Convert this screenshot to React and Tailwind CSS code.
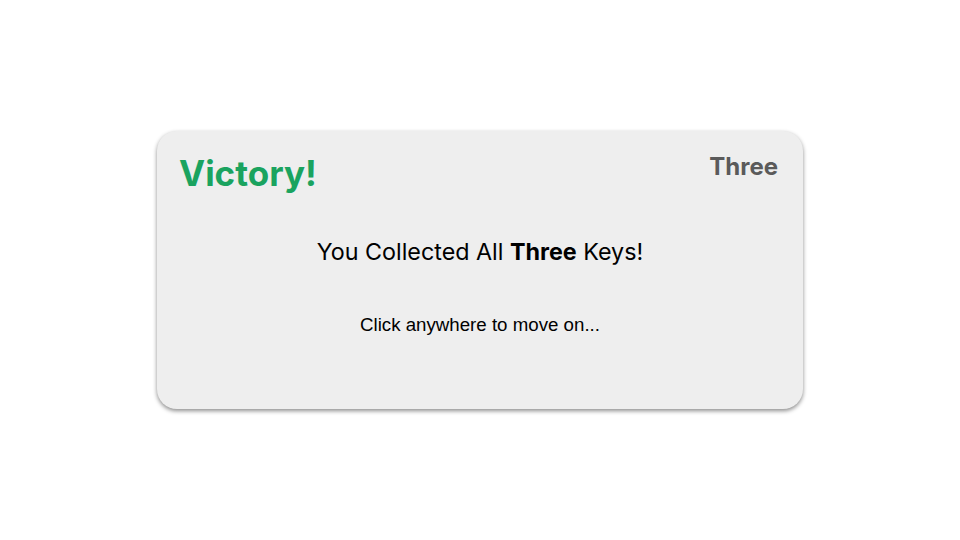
export default function App() {
  return (
    <div className="w-[960px] h-[540px] bg-white flex items-center justify-center">
      <div className="w-[646px] h-[278px] -mt-[1px] bg-[#eeeeee] rounded-[20px] shadow-[0_2px_4px_rgba(0,0,0,0.45)] flex flex-col px-[22px] pt-[20px]">
        <div className="flex justify-between items-start">
          <div className="text-[35px] leading-[44px] font-bold text-[#1aa35f]" style={{ fontFamily: "Inter, sans-serif" }}>Victory!</div>
          <div className="text-[24px] leading-[32px] font-bold text-[#5a5a5a] mr-[3px]" style={{ fontFamily: "Inter, sans-serif" }}>Three</div>
        </div>
        <div className="mt-[42px] text-center text-[23.3px] leading-[30px] text-black" style={{ fontFamily: "Inter, sans-serif" }}>
          You Collected All <span className="font-bold">Three</span> Keys!
        </div>
        <div className="mt-[46px] text-center text-[18.7px] leading-[24px] text-black" style={{ fontFamily: "'Liberation Sans', Arial, sans-serif" }}>
          Click anywhere to move on...
        </div>
      </div>
    </div>
  );
}
